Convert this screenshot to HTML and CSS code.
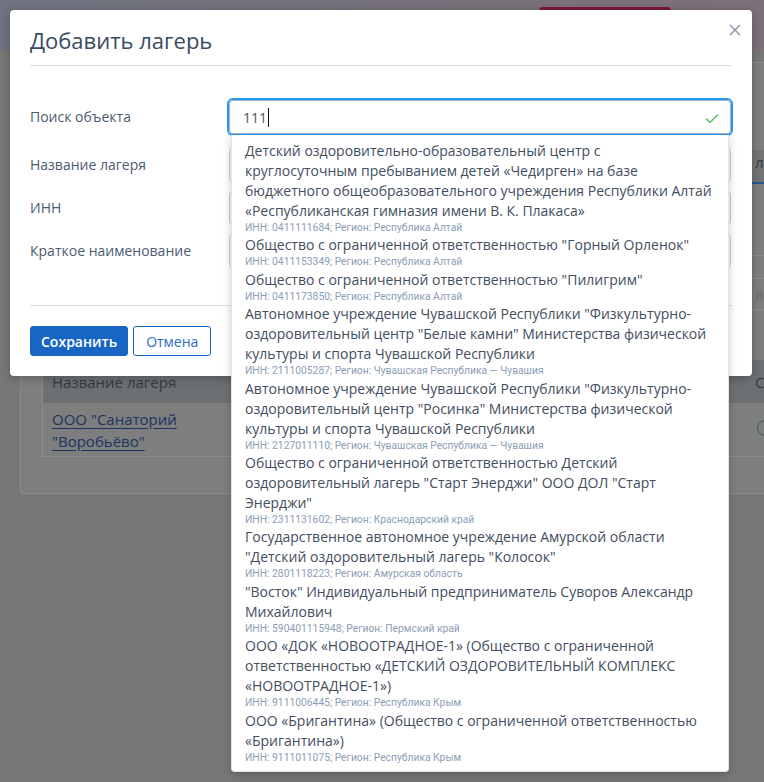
FILE: index.html
```html
<!DOCTYPE html>
<html>
<head>
    <meta name="viewport" content="width=device-width, initial-scale=1.0">
    <link rel="stylesheet" href="styles.css">
</head>
<body>
    <div class="page">
        <header class="topbar">
            <span class="topbar-btn"></span>
        </header>
        <main class="content">
            <div class="card">
                <div class="toolbar">
                    <div></div>
                    <div class="side">
                        <div class="side-tab">лагеря</div>
                        <div class="side-line"></div>
                        <div class="side-field">лагеря</div>
                    </div>
                </div>
                <div class="camp-table">
                    <div class="camp-head">
                        <span>Название лагеря</span>
                        <span></span>
                        <span>Статус</span>
                    </div>
                    <div class="camp-row">
                        <span><a class="camp-link" href="#">ООО "Санаторий "Воробьёво"</a></span>
                        <span></span>
                        <span><i class="status-dot"></i></span>
                    </div>
                </div>
            </div>
        </main>
    </div>

    <div class="modal">
        <div class="modal-header">
            <h1 class="modal-title">Добавить лагерь</h1>
            <button class="close-btn" type="button">
                <svg width="12" height="12" viewBox="0 0 12 12"><path d="M1 1 L11 11 M11 1 L1 11" stroke="#8791a3" stroke-width="1.4" fill="none"/></svg>
            </button>
        </div>

        <div class="form">
            <div class="form-row form-row-search">
                <label class="form-label">Поиск объекта</label>
                <div class="field field-focus">
                    <span class="field-value">111</span><span class="caret"></span>
                    <svg class="field-check" width="14" height="11" viewBox="0 0 14 11"><path d="M1 5.5 L5 9.5 L13 1.5" stroke="#62bd69" stroke-width="1.5" fill="none"/></svg>

                    <div class="dropdown">
                        <div class="dropdown-item">
                            <div class="item-name">Детский оздоровительно-образовательный центр с круглосуточным пребыванием детей «Чедирген» на базе бюджетного общеобразовательного учреждения Республики Алтай «Республиканская гимназия имени В. К. Плакаса»</div>
                            <div class="item-meta">ИНН: 0411111684; Регион: Республика Алтай</div>
                        </div>
                        <div class="dropdown-item">
                            <div class="item-name">Общество с ограниченной ответственностью "Горный Орленок"</div>
                            <div class="item-meta">ИНН: 0411153349; Регион: Республика Алтай</div>
                        </div>
                        <div class="dropdown-item">
                            <div class="item-name">Общество с ограниченной ответственностью "Пилигрим"</div>
                            <div class="item-meta">ИНН: 0411173850; Регион: Республика Алтай</div>
                        </div>
                        <div class="dropdown-item">
                            <div class="item-name">Автономное учреждение Чувашской Республики "Физкультурно-оздоровительный центр "Белые камни" Министерства физической культуры и спорта Чувашской Республики</div>
                            <div class="item-meta">ИНН: 2111005287; Регион: Чувашская Республика — Чувашия</div>
                        </div>
                        <div class="dropdown-item">
                            <div class="item-name">Автономное учреждение Чувашской Республики "Физкультурно-оздоровительный центр "Росинка" Министерства физической культуры и спорта Чувашской Республики</div>
                            <div class="item-meta">ИНН: 2127011110; Регион: Чувашская Республика — Чувашия</div>
                        </div>
                        <div class="dropdown-item">
                            <div class="item-name">Общество с ограниченной ответственностью Детский оздоровительный лагерь "Старт Энерджи" ООО ДОЛ "Старт Энерджи"</div>
                            <div class="item-meta">ИНН: 2311131602; Регион: Краснодарский край</div>
                        </div>
                        <div class="dropdown-item">
                            <div class="item-name">Государственное автономное учреждение Амурской области "Детский оздоровительный лагерь "Колосок"</div>
                            <div class="item-meta">ИНН: 2801118223; Регион: Амурская область</div>
                        </div>
                        <div class="dropdown-item">
                            <div class="item-name">"Восток" Индивидуальный предприниматель Суворов Александр Михайлович</div>
                            <div class="item-meta">ИНН: 590401115948; Регион: Пермский край</div>
                        </div>
                        <div class="dropdown-item">
                            <div class="item-name">ООО «ДОК «НОВООТРАДНОЕ-1» (Общество с ограниченной ответственностью «ДЕТСКИЙ ОЗДОРОВИТЕЛЬНЫЙ КОМПЛЕКС «НОВООТРАДНОЕ-1»)</div>
                            <div class="item-meta">ИНН: 9111006445; Регион: Республика Крым</div>
                        </div>
                        <div class="dropdown-item">
                            <div class="item-name">ООО «Бригантина» (Общество с ограниченной ответственностью «Бригантина»)</div>
                            <div class="item-meta">ИНН: 9111011075; Регион: Республика Крым</div>
                        </div>
                    </div>
                </div>
            </div>
            <div class="form-row">
                <label class="form-label">Название лагеря</label>
                <div class="field"></div>
            </div>
            <div class="form-row">
                <label class="form-label">ИНН</label>
                <div class="field"></div>
            </div>
            <div class="form-row">
                <label class="form-label">Краткое наименование</label>
                <div class="field"></div>
            </div>
        </div>

        <div class="modal-footer">
            <button class="btn btn-primary" type="button">Сохранить</button>
            <button class="btn btn-outline" type="button">Отмена</button>
        </div>
    </div>
</body>
</html>
```

FILE: styles.css
```css
body {
    font-family: "Open Sans", sans-serif;
    background-color: #777777;
    margin: 0;
    padding: 0;
    width: 764px;
    height: 782px;
    overflow: hidden;
    position: relative;
}

/* page behind the overlay (already dimmed) */
.topbar {
    height: 50px;
    box-sizing: border-box;
    padding: 7px 93px 0 0;
    display: flex;
    justify-content: flex-end;
    background: linear-gradient(90deg, #6f7480, #7e7078);
}

.topbar-btn {
    width: 132px;
    height: 34px;
    background-color: #7a1838;
    border-radius: 4px;
}

.content {
    padding: 12px 0 0 20px;
}

.card {
    background-color: #7e7e7e;
    border: 1px solid #8c8c8c;
    border-right: none;
    border-radius: 4px 0 0 4px;
    padding: 0 0 36px 21px;
    overflow: hidden;
}

.toolbar {
    height: 297px;
    display: grid;
    grid-template-columns: 703px 1fr;
}

.side {
    color: #36393d;
    font-size: 15px;
    white-space: nowrap;
}

.side-tab {
    margin-top: 87px;
    padding-left: 10px;
    line-height: 24px;
    padding-bottom: 8px;
    border-bottom: 2px solid #2a5690;
    background-color: #747474;
}

.side-line {
    margin-top: 71px;
    height: 22px;
    border-top: 1px solid #8c8c8c;
    border-bottom: 1px solid #8c8c8c;
}

.side-field {
    padding-left: 10px;
    line-height: 30px;
    border-bottom: 1px solid #8c8c8c;
    color: #6a6a6a;
}

.camp-table {
    border-left: 1px solid #8c8c8c;
}

.camp-head,
.camp-row {
    display: grid;
    grid-template-columns: 162px 541px 1fr;
}

.camp-head {
    background-color: #6c7073;
    color: #36393d;
    font-size: 15px;
    line-height: 20px;
    white-space: nowrap;
}

.camp-head span {
    padding: 12px 10px 11px 9px;
}

.camp-row {
    border-bottom: 1px solid #8c8c8c;
}

.camp-row > span {
    padding: 5px 10px 4px 9px;
}

.camp-link {
    color: #1b3560;
    font-size: 15px;
    line-height: 20px;
    text-decoration: underline;
    text-underline-offset: 3px;
}

.status-dot {
    display: block;
    width: 14px;
    height: 14px;
    margin: 12px 0 0 2px;
    border: 1px solid #2f6a35;
    border-radius: 50%;
}

/* modal */
.modal {
    position: absolute;
    left: 10px;
    top: 10px;
    width: 742px;
    box-sizing: border-box;
    padding: 0 20px 20px;
    background-color: #fff;
    border-radius: 4px;
    box-shadow: 0 2px 10px rgba(0, 0, 0, 0.25);
}

.modal-header {
    height: 56px;
    box-sizing: border-box;
    padding-top: 14px;
    border-bottom: 1px solid #d9dde3;
}

.modal-title {
    margin: 0;
    font-size: 22px;
    font-weight: 400;
    line-height: 32px;
    color: #3b4a63;
}

.close-btn {
    position: absolute;
    top: 14px;
    right: 11px;
    padding: 0;
    border: none;
    background: none;
    width: 12px;
    height: 12px;
    cursor: pointer;
}

.form {
    padding-top: 34px;
}

.form-row {
    display: flex;
    align-items: center;
    margin-bottom: 9px;
}

.form-row-search {
    margin-bottom: 14px;
}

.form-label {
    width: 199px;
    font-size: 14px;
    line-height: 18px;
    color: #4d5b72;
    margin-top: -1px;
}

.field {
    position: relative;
    width: 502px;
    height: 34px;
    box-sizing: border-box;
    border: 1px solid #c9d0d9;
    border-radius: 4px;
    display: flex;
    align-items: center;
    padding-left: 13px;
}

.field-focus {
    border-color: #a9b3c3;
    box-shadow: 0 0 0 2px #2196f3;
}

.field-value {
    font-size: 14px;
    color: #555;
}

.caret {
    width: 1px;
    height: 19px;
    margin-left: 1px;
    background-color: #111;
}

.field-check {
    position: absolute;
    right: 11px;
    top: 12px;
}

.dropdown {
    position: absolute;
    top: 34px;
    left: 1px;
    width: 498px;
    box-sizing: border-box;
    padding: 6px 0;
    background-color: #fff;
    border: 1px solid #e1e5ea;
    border-top: none;
    border-radius: 0 0 4px 4px;
    box-shadow: 0 3px 8px rgba(0, 0, 0, 0.22);
    z-index: 2;
}

.dropdown-item {
    padding: 0 15px 0 13px;
}

.item-name {
    font-size: 14px;
    line-height: 20px;
    color: #434e60;
}

.item-meta {
    font-family: Roboto, sans-serif;
    font-size: 10.3px;
    line-height: 14.4px;
    color: #8c9db6;
}

.modal-footer {
    display: flex;
    gap: 5px;
    margin-top: 37px;
    padding-top: 20px;
    border-top: 1px solid #d9dde3;
}

.btn {
    height: 30px;
    padding: 0 12px;
    font-family: "Open Sans", sans-serif;
    font-size: 14px;
    border-radius: 3px;
    cursor: pointer;
}

.btn-primary {
    background-color: #1866c4;
    border: 1px solid #1866c4;
    color: #fff;
    font-weight: 600;
    padding: 0 10px;
}

.btn-outline {
    background-color: #fff;
    border: 1px solid #1866c4;
    color: #2a6cc4;
}
```
